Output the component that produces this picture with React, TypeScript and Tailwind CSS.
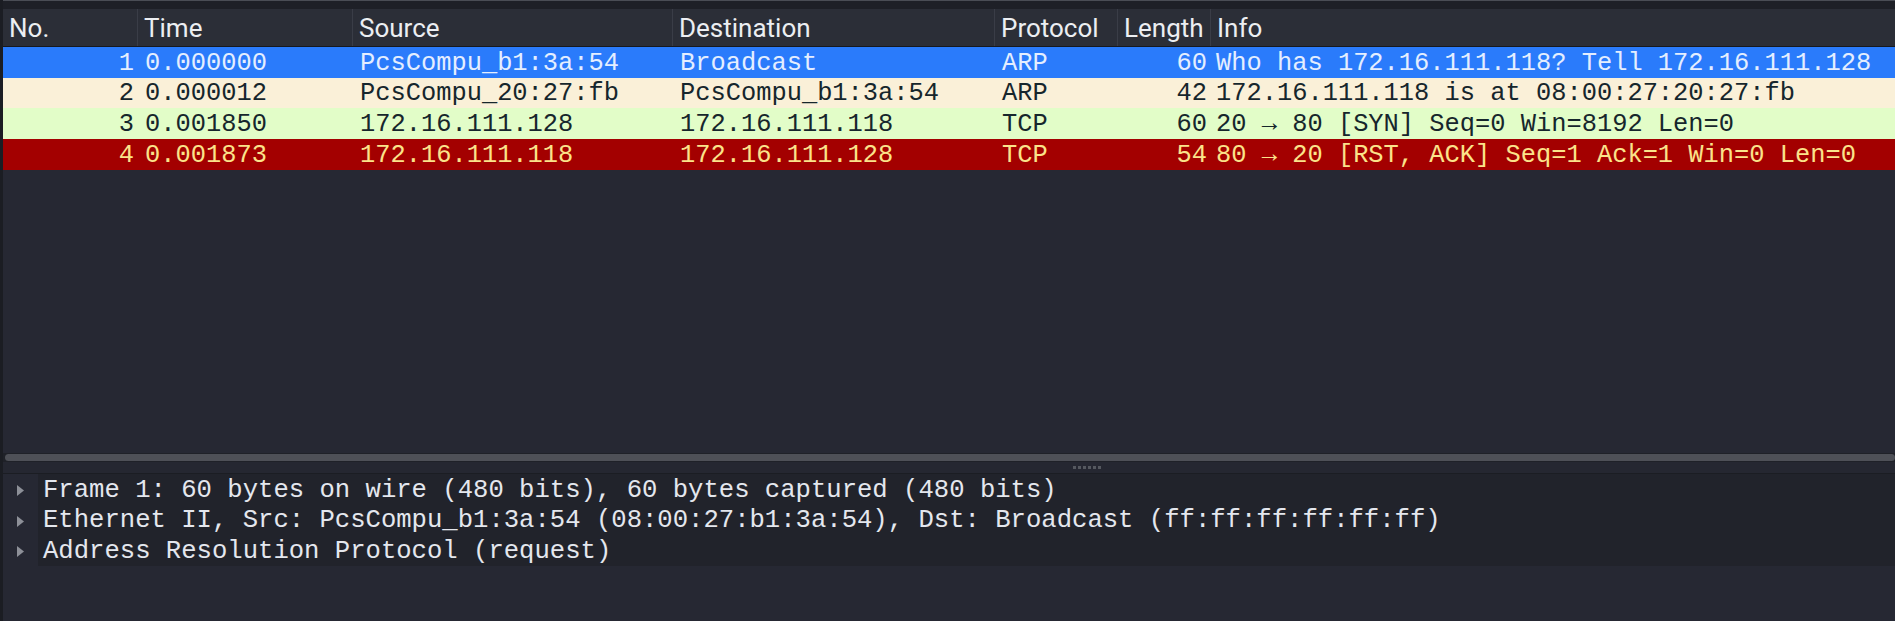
import React from 'react';

type Packet = {
  no: number;
  time: string;
  source: string;
  destination: string;
  protocol: string;
  length: number;
  info: string;
  row: string;
};

const packets: Packet[] = [
  {
    no: 1,
    time: '0.000000',
    source: 'PcsCompu_b1:3a:54',
    destination: 'Broadcast',
    protocol: 'ARP',
    length: 60,
    info: 'Who has 172.16.111.118? Tell 172.16.111.128',
    row: 'bg-[#2a7bfb] text-[#e4eeff]',
  },
  {
    no: 2,
    time: '0.000012',
    source: 'PcsCompu_20:27:fb',
    destination: 'PcsCompu_b1:3a:54',
    protocol: 'ARP',
    length: 42,
    info: '172.16.111.118 is at 08:00:27:20:27:fb',
    row: 'bg-[#faf0d8] text-[#16262c]',
  },
  {
    no: 3,
    time: '0.001850',
    source: '172.16.111.128',
    destination: '172.16.111.118',
    protocol: 'TCP',
    length: 60,
    info: '20 → 80 [SYN] Seq=0 Win=8192 Len=0',
    row: 'bg-[#e2fdc8] text-[#16262c]',
  },
  {
    no: 4,
    time: '0.001873',
    source: '172.16.111.118',
    destination: '172.16.111.128',
    protocol: 'TCP',
    length: 54,
    info: '80 → 20 [RST, ACK] Seq=1 Ack=1 Win=0 Len=0',
    row: 'bg-[#a30000] text-[#fbe38a]',
  },
];

const details = [
  'Frame 1: 60 bytes on wire (480 bits), 60 bytes captured (480 bits)',
  'Ethernet II, Src: PcsCompu_b1:3a:54 (08:00:27:b1:3a:54), Dst: Broadcast (ff:ff:ff:ff:ff:ff)',
  'Address Resolution Protocol (request)',
];

const mono = { fontFamily: '"Liberation Mono", "DejaVu Sans Mono", monospace' };

const HeaderCell: React.FC<{ label: string; width: string; last?: boolean }> = ({ label, width, last }) => (
  <div
    className={`${width} h-full flex items-center pl-[6px] pt-[2px] border-r border-[#3a3d47] ${last ? 'flex-1 border-r-0' : 'shrink-0'}`}
  >
    {label}
  </div>
);

export default function App() {
  return (
    <div className="w-full h-[621px] flex flex-col bg-[#262833] border-l-[3px] border-[#1b1d23] overflow-hidden">
      {/* top strip */}
      <div className="h-[1px] bg-[#4a4d55] shrink-0" />
      <div className="h-[8px] bg-[#1e2027] shrink-0" />

      {/* column header */}
      <div
        className="h-[38px] shrink-0 flex bg-[#2b2e37] border-b border-[#17191e] text-[#eceef2] text-[26px]"
        style={{ fontFamily: 'Roboto, "Noto Sans", sans-serif' }}
      >
        <HeaderCell label="No." width="w-[135px]" />
        <HeaderCell label="Time" width="w-[215px]" />
        <HeaderCell label="Source" width="w-[320px]" />
        <HeaderCell label="Destination" width="w-[322px]" />
        <HeaderCell label="Protocol" width="w-[123px]" />
        <HeaderCell label="Length" width="w-[93px]" />
        <HeaderCell label="Info" width="" last />
      </div>

      {/* packet list */}
      <div className="shrink-0 flex flex-col text-[25.4px] leading-none" style={mono}>
        {packets.map((p) => (
          <div key={p.no} className={`h-[30.67px] flex items-center pt-[2px] whitespace-pre ${p.row}`}>
            <div className="w-[135px] shrink-0 text-right pr-[4px]">{p.no}</div>
            <div className="w-[215px] shrink-0 pl-[7px]">{p.time}</div>
            <div className="w-[320px] shrink-0 pl-[7px]">{p.source}</div>
            <div className="w-[322px] shrink-0 pl-[7px]">{p.destination}</div>
            <div className="w-[123px] shrink-0 pl-[7px]">{p.protocol}</div>
            <div className="w-[93px] shrink-0 text-right pr-[4px]">{p.length}</div>
            <div className="flex-1 pl-[5px]">{p.info}</div>
          </div>
        ))}
      </div>

      <div className="flex-1" />

      {/* horizontal scrollbar + splitter */}
      <div className="h-[9px] shrink-0 pl-[2px] flex items-center bg-[#1f2128]">
        <div className="h-[7px] w-full rounded-full bg-[#4e5057]" />
      </div>
      <div className="h-[12px] shrink-0 flex items-center justify-center bg-[#252731] border-b border-[#1b1d23]">
        <div className="flex gap-[2px] ml-[275px]">
          {[0, 1, 2, 3, 4, 5].map((i) => (
            <span key={i} className="w-[3px] h-[3px] bg-[#55585f]" />
          ))}
        </div>
      </div>

      {/* packet details */}
      <div className="shrink-0 flex flex-col text-[25.6px] leading-none text-[#e4e7ee]" style={mono}>
        {details.map((d) => (
          <div key={d} className="h-[30.67px] flex items-stretch">
            <div className="w-[35px] shrink-0 flex items-center pl-[14px] pt-[2px]">
              <svg width="7" height="11" viewBox="0 0 7 11">
                <path d="M0 0 L7 5.5 L0 11 Z" fill="#8d9098" />
              </svg>
            </div>
            <div className="flex-1 flex items-center pl-[5px] pt-[2px] bg-[#21232b] whitespace-pre">{d}</div>
          </div>
        ))}
      </div>

      <div className="h-[55px] shrink-0" />
    </div>
  );
}
